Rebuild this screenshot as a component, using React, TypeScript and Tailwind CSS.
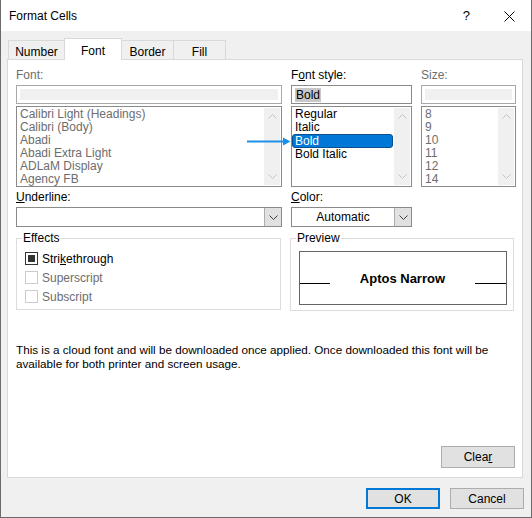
import React from "react";

// Excel "Format Cells" dialog, Font tab.
const FONT = "font-['Liberation_Sans','Noto_Sans',sans-serif]";

const FONTS = [
  "Calibri Light (Headings)",
  "Calibri (Body)",
  "Abadi",
  "Abadi Extra Light",
  "ADLaM Display",
  "Agency FB",
];
const STYLES = ["Regular", "Italic", "Bold", "Bold Italic"];
const SIZES = ["8", "9", "10", "11", "12", "14"];

function Chevron({ up, className }: { up?: boolean; className?: string }) {
  return (
    <svg width="9" height="5" viewBox="0 0 9 5" className={className}>
      <path
        d={up ? "M0.5 4.5 L4.5 0.5 L8.5 4.5" : "M0.5 0.5 L4.5 4.5 L8.5 0.5"}
        fill="none"
        stroke="currentColor"
        strokeWidth="1"
      />
    </svg>
  );
}

function ListBox({
  items,
  width,
  muted,
  selected,
}: {
  items: string[];
  width: string;
  muted?: boolean;
  selected?: string;
}) {
  return (
    <div className={`mt-[2px] flex h-[81px] border border-[#8a8a8a] bg-white ${width}`}>
      <div className="flex flex-1 flex-col pt-[1px]">
        {items.map((it) =>
          it === selected ? (
            <div
              key={it}
              className="h-[14px] rounded-[3px] border border-[#0a4f8f] bg-[#0078d7] pl-[2px] leading-[12px] text-white"
            >
              {it}
            </div>
          ) : (
            <div
              key={it}
              className={`h-[13px] pl-[3px] leading-[13px] ${muted ? "text-[#6d6d6d]" : "text-black"}`}
            >
              {it}
            </div>
          ),
        )}
      </div>
      <div className="m-[1px] flex w-[16px] flex-col items-center justify-between bg-[#f0f0f0] py-[6px] text-[#c4c4c4]">
        <Chevron up />
        <Chevron />
      </div>
    </div>
  );
}

function Combo({ width, children }: { width: string; children?: React.ReactNode }) {
  return (
    <div className={`mt-[2px] flex h-[20px] border border-[#8a8a8a] bg-white ${width}`}>
      <div className="flex flex-1 items-center justify-center leading-[14px]">{children}</div>
      <div className="flex w-[17px] items-center justify-center border-l border-[#adadad] bg-[#e1e1e1] text-[#404040]">
        <Chevron />
      </div>
    </div>
  );
}

function Check({ label, checked, disabled }: { label: React.ReactNode; checked?: boolean; disabled?: boolean }) {
  return (
    <div className="flex h-[19px] items-center gap-[4px] pl-[8px]">
      <div
        className={`flex h-[13px] w-[13px] items-center justify-center border bg-white ${
          disabled ? "border-[#cccccc]" : "border-[#333333]"
        }`}
      >
        {checked && <div className="h-[7px] w-[7px] bg-[#333333]" />}
      </div>
      <span className={disabled ? "text-[#6d6d6d]" : "text-black"}>{label}</span>
    </div>
  );
}

function Tab({ label, active, className }: { label: string; active?: boolean; className: string }) {
  return active ? (
    <div
      className={`relative z-10 -mb-[1px] -ml-[1px] flex h-[22px] items-start justify-center border border-b-0 border-[#d9d9d9] bg-white pt-[3px] ${className}`}
    >
      {label}
    </div>
  ) : (
    <div
      className={`-ml-[1px] mt-[2px] flex h-[19px] items-center justify-center border border-b-0 border-[#d9d9d9] bg-[#f0f0f0] pt-[3px] ${className}`}
    >
      {label}
    </div>
  );
}

export default function App() {
  return (
    <div
      className={`relative flex h-[518px] w-[532px] flex-col border-x border-b border-[#6b6b6b] bg-[#f0f0f0] text-[12px] text-black ${FONT}`}
    >
      {/* title bar */}
      <div className="flex h-[31px] items-center bg-white pl-[8px] pr-[16px] pt-[1px]">
        <span className="flex-1">Format Cells</span>
        <span className="mr-[34px] text-[13px]">?</span>
        <svg width="11" height="11" viewBox="0 0 11 11">
          <path d="M0.5 0.5 L10.5 10.5 M10.5 0.5 L0.5 10.5" stroke="#000" strokeWidth="1" />
        </svg>
      </div>

      {/* tabs */}
      <div className="ml-[8px] mt-[7px] flex h-[21px] items-start">
        <Tab label="Number" className="w-[57px]" />
        <Tab label="Font" active className="w-[58px]" />
        <Tab label="Border" className="w-[53px]" />
        <Tab label="Fill" className="w-[53px]" />
      </div>

      {/* panel */}
      <div className="ml-[6px] flex h-[419px] w-[516px] flex-col border border-[#d9d9d9] bg-white px-[8px] pt-[8px]">
        <div className="flex gap-[9px]">
          <div className="flex w-[266px] flex-col">
            <div className="h-[15px] leading-[15px] text-[#6d6d6d]">Font:</div>
            <div className="mt-[2px] h-[19px] border border-[#a8a8a8] p-[3px]">
              <div className="h-full bg-[#f0f0f0]" />
            </div>
            <ListBox items={FONTS} width="w-[266px]" muted />
          </div>
          <div className="flex w-[121px] flex-col">
            <div className="h-[15px] leading-[15px]">
              F<u>o</u>nt style:
            </div>
            <div className="mt-[2px] flex h-[19px] items-center border border-[#8a8a8a] pl-[3px]">
              <span className="bg-[#c8c8c8] px-[1px] leading-[14px]">Bold</span>
            </div>
            <ListBox items={STYLES} width="w-[121px]" selected="Bold" />
          </div>
          <div className="flex w-[95px] flex-col">
            <div className="h-[15px] leading-[15px] text-[#6d6d6d]">Size:</div>
            <div className="mt-[2px] h-[19px] border border-[#a8a8a8] p-[3px]">
              <div className="h-full bg-[#f0f0f0]" />
            </div>
            <ListBox items={SIZES} width="w-[95px]" muted />
          </div>
        </div>

        <div className="mt-[3px] flex gap-[9px]">
          <div className="flex w-[266px] flex-col">
            <div className="h-[15px] leading-[15px]">
              <u>U</u>nderline:
            </div>
            <Combo width="w-[266px]" />
          </div>
          <div className="flex w-[121px] flex-col">
            <div className="h-[15px] leading-[15px]">
              <u>C</u>olor:
            </div>
            <Combo width="w-[121px]">Automatic</Combo>
          </div>
        </div>

        <div className="mt-[4px] flex gap-[9px]">
          <fieldset className="h-[79px] w-[266px] border border-[#dcdcdc]">
            <legend className="ml-[5px] px-[1px] leading-[15px]">Effects</legend>
            <div className="flex flex-col pt-[3px]">
              <Check
                checked
                label={
                  <>
                    Stri<u>k</u>ethrough
                  </>
                }
              />
              <Check disabled label="Superscript" />
              <Check disabled label="Subscript" />
            </div>
          </fieldset>
          <fieldset className="h-[80px] w-[225px] border border-[#dcdcdc]">
            <legend className="ml-[5px] px-[1px] leading-[15px]">Preview</legend>
            <div className="ml-[8px] mt-[5px] flex h-[54px] w-[208px] items-center border border-[#646464]">
              <div className="mt-[11px] h-px w-[30px] bg-black" />
              <div className="flex-1 pt-[1px] text-center text-[13px] font-bold">Aptos Narrow</div>
              <div className="mt-[11px] h-px w-[31px] bg-black" />
            </div>
          </fieldset>
        </div>

        <p className="mt-[32px] whitespace-nowrap text-[11.7px] leading-[14px]">
          This is a cloud font and will be downloaded once applied. Once downloaded this font will be
          <br />
          available for both printer and screen usage.
        </p>

        <div className="flex-1" />
        <div className="flex justify-end pb-[9px]">
          <button className="-mr-[1px] h-[22px] w-[74px] border border-[#adadad] bg-[#e1e1e1]">
            Clea<u>r</u>
          </button>
        </div>
      </div>

      {/* dialog buttons */}
      <div className="mt-[10px] flex justify-end gap-[10px] pr-[7px]">
        <button className="h-[21px] w-[74px] border-2 border-[#0078d7] bg-[#e1e1e1]">OK</button>
        <button className="h-[21px] w-[74px] border border-[#adadad] bg-[#e1e1e1]">Cancel</button>
      </div>

      {/* pointer arrow drawn over the dialog */}
      <svg className="absolute left-[246px] top-[137px]" width="44" height="9" viewBox="0 0 44 9">
        <path d="M0 4.5 H37" stroke="#1c8fe6" strokeWidth="2" />
        <path d="M36 0.5 L43.5 4.5 L36 8.5 Z" fill="#1c8fe6" />
      </svg>
    </div>
  );
}
